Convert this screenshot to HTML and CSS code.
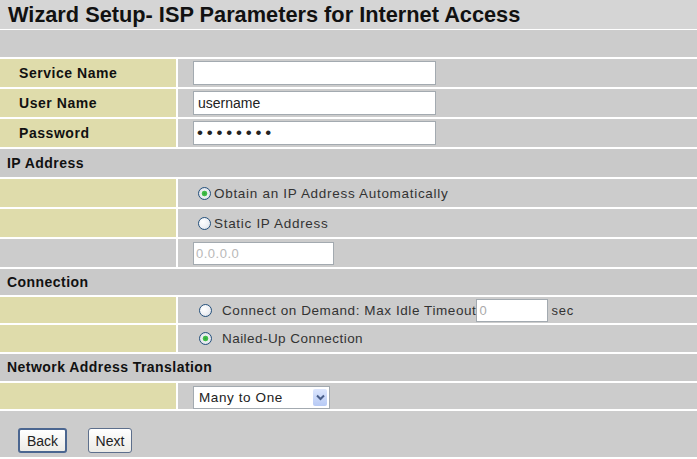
FILE: index.html
```html
<!DOCTYPE html>
<html lang="en">
<head>
    <meta charset="UTF-8">
    <title>Wizard Setup - ISP Parameters</title>
    <link rel="stylesheet" href="styles.css">
</head>
<body>
<div class="page">
    <h1 class="title">Wizard Setup- ISP Parameters for Internet Access</h1>
    <div class="row blank"></div>

    <div class="row">
        <div class="label">Service Name</div>
        <div class="value"><input class="text wide" type="text" value=""></div>
    </div>
    <div class="row">
        <div class="label">User Name</div>
        <div class="value"><input class="text wide" type="text" value="username"></div>
    </div>
    <div class="row">
        <div class="label">Password</div>
        <div class="value"><input class="text wide pass" type="password" value="password"></div>
    </div>

    <div class="row head">IP Address</div>
    <div class="row">
        <div class="label"></div>
        <div class="value"><label class="opt"><input type="radio" name="ip" checked>Obtain an IP Address Automatically</label></div>
    </div>
    <div class="row">
        <div class="label"></div>
        <div class="value"><label class="opt"><input type="radio" name="ip">Static IP Address</label></div>
    </div>
    <div class="row">
        <div class="label grey"></div>
        <div class="value"><input class="text ip" type="text" value="0.0.0.0" disabled></div>
    </div>

    <div class="row head short">Connection</div>
    <div class="row short">
        <div class="label"></div>
        <div class="value"><label class="opt spaced long"><input type="radio" name="conn">Connect on Demand: Max Idle Timeout</label><input class="text idle" type="text" value="0"><span class="unit">sec</span></div>
    </div>
    <div class="row mid">
        <div class="label"></div>
        <div class="value"><label class="opt spaced"><input type="radio" name="conn" checked>Nailed-Up Connection</label></div>
    </div>

    <div class="row head mid">Network Address Translation</div>
    <div class="row short">
        <div class="label"></div>
        <div class="value">
            <span class="select">
                <select>
                    <option>Many to One</option>
                    <option>One to One</option>
                    <option>None</option>
                </select>
                <span class="arrow"><svg width="9" height="7" viewBox="0 0 9 7"><path d="M1 1.5 L4.5 5 L8 1.5" fill="none" stroke="#4a5f8a" stroke-width="2"/></svg></span>
            </span>
        </div>
    </div>

    <div class="actions">
        <button class="btn default" type="button">Back</button>
        <button class="btn" type="button">Next</button>
    </div>
</div>
</body>
</html>
```

FILE: styles.css
```css
body {
    margin: 0;
    background: #fff;
    font-family: "Liberation Sans", Arial, sans-serif;
    color: #111;
}

.page {
    display: flex;
    flex-direction: column;
}

.title {
    margin: 0;
    height: 29px;
    padding-left: 8px;
    background: #d5d5d5;
    font-size: 21.75px;
    line-height: 29px;
    font-weight: bold;
    color: #111;
}

.row {
    display: grid;
    grid-template-columns: 176px 1fr;
    column-gap: 2px;
    height: 28px;
    margin-top: 2px;
}

.row.blank {
    display: block;
    height: 27px;
    margin-top: 1px;
    background: #cccccc;
}

.row.short {
    height: 26px;
}

.row.mid {
    height: 27px;
}

.label {
    background: #dfdcab;
    padding-left: 19px;
    font-size: 14px;
    font-weight: bold;
    line-height: 28px;
    letter-spacing: .55px;
}

.label.grey {
    background: #cccccc;
}

.value {
    display: flex;
    align-items: center;
    background: #cccccc;
    padding-left: 15px;
}

.head {
    display: block;
    background: #c9c9c9;
    padding-left: 7px;
    font-size: 14px;
    font-weight: bold;
    line-height: 28px;
    letter-spacing: .45px;
}

.head.short {
    line-height: 26px;
}

.head.mid {
    line-height: 27px;
}

.text {
    box-sizing: border-box;
    height: 24px;
    margin: 0;
    padding: 0 4px;
    border: 1px solid #a3aab0;
    background: #fff;
    font-family: "Liberation Sans", Arial, sans-serif;
    font-size: 14px;
    color: #222;
    outline: none;
}

.text.wide {
    width: 243px;
}

.text.pass {
    font-size: 17px;
    letter-spacing: 3.8px;
    padding-left: 3px;
}

.text.ip {
    width: 141px;
    height: 23px;
    padding-left: 2px;
    font-size: 13px;
    color: #b8b8b8;
    letter-spacing: .5px;
}

.text.idle {
    width: 72px;
    height: 23px;
    padding-left: 2px;
    font-size: 13px;
    color: #aaa;
}

.unit {
    margin-left: 3px;
    font-size: 13px;
    letter-spacing: .8px;
    color: #333;
}

.opt {
    display: flex;
    align-items: center;
    font-size: 13.5px;
    letter-spacing: .7px;
    color: #333;
}

.opt input {
    appearance: none;
    -webkit-appearance: none;
    box-sizing: border-box;
    width: 13px;
    height: 13px;
    margin: 0 3px 0 5px;
    border: 1px solid #24507c;
    border-radius: 50%;
    background: radial-gradient(circle at 35% 35%, #ffffff 0, #eef0f4 55%, #cfd5de 100%);
}

.opt input:checked {
    background: radial-gradient(circle, #2fa83a 0, #48c24f 2.5px, #eef0f4 3.2px, #cfd5de 100%);
}

.opt.spaced {
    letter-spacing: .45px;
}

.opt.long {
    letter-spacing: .58px;
}

.opt.spaced input {
    margin-left: 6px;
    margin-right: 10px;
}

.select {
    display: inline-flex;
    align-items: center;
    box-sizing: border-box;
    width: 137px;
    height: 23px;
    margin-top: 2px;
    border: 1px solid #a3aab0;
    background: #fff;
}

.select select {
    appearance: none;
    -webkit-appearance: none;
    flex: 1;
    height: 100%;
    margin: 0;
    padding: 0 0 0 5px;
    border: 0;
    background: transparent;
    font-family: "Liberation Sans", Arial, sans-serif;
    font-size: 13.5px;
    letter-spacing: .6px;
    color: #222;
    outline: none;
}

.arrow {
    display: flex;
    align-items: center;
    justify-content: center;
    width: 14px;
    height: 17px;
    margin-right: 2px;
    border-radius: 2px;
    background: linear-gradient(#dce6fd, #b7caf5);
}

.actions {
    display: flex;
    gap: 21px;
    height: 46px;
    margin-top: 2px;
    padding-left: 18px;
    padding-top: 17px;
    box-sizing: border-box;
    background: #cccccc;
}

.btn {
    height: 25px;
    padding: 0 5px;
    border: 1px solid #5d6f8c;
    border-radius: 3px;
    background: linear-gradient(#ffffff, #ecebe6);
    font-family: "Liberation Sans", Arial, sans-serif;
    font-size: 14px;
    color: #222;
}

.btn.default {
    width: 49px;
    border: 2px solid #4b6690;
}

.btn:not(.default) {
    width: 44px;
}
```
